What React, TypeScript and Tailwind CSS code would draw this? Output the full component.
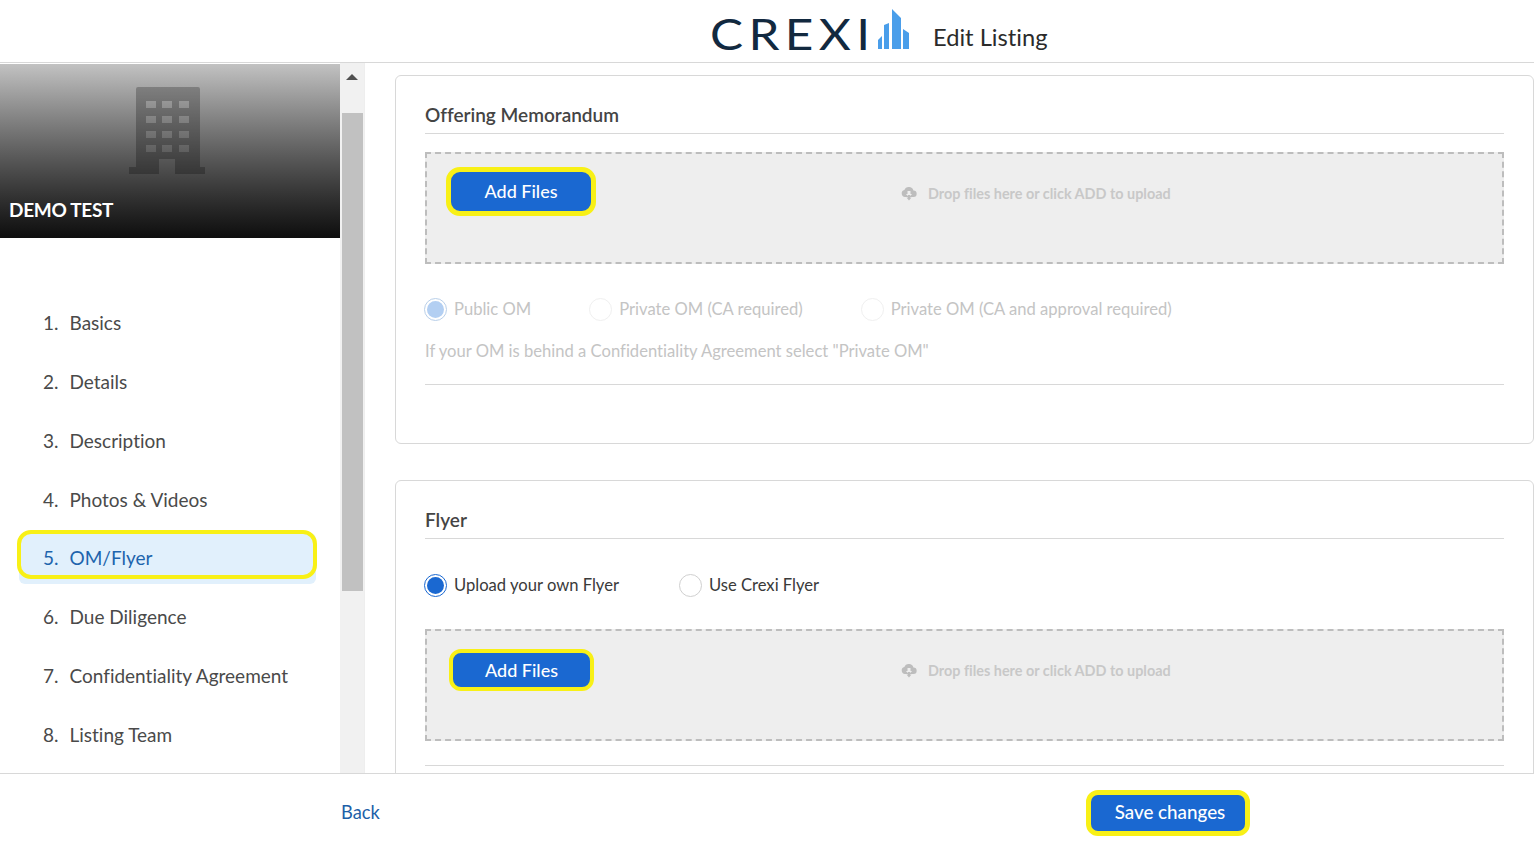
const navItems = [
  "Basics",
  "Details",
  "Description",
  "Photos & Videos",
  "OM/Flyer",
  "Due Diligence",
  "Confidentiality Agreement",
  "Listing Team",
];

const Radio = ({ checked = false, faded = false, label }: { checked?: boolean; faded?: boolean; label: string }) => (
  <div className="flex items-start gap-[7px]">
    <span
      className={`flex h-[23px] w-[23px] items-center justify-center rounded-full border bg-white ${
        checked ? (faded ? "border-[#b9cfe9]" : "border-[#1a68d1]") : faded ? "border-[#f0f0f0]" : "border-[#d0d0d0]"
      }`}
    >
      {checked && <span className={`h-[17px] w-[17px] rounded-full ${faded ? "bg-[#b3cff2]" : "bg-[#1a68d1]"}`} />}
    </span>
    <span className={`text-[16.6px] leading-[23px] ${faded ? "text-[#c4c4c4]" : "text-[#3a3a3a]"}`}>{label}</span>
  </div>
);

const CloudIcon = () => (
  <svg width="16" height="15" viewBox="0 0 16 15">
    <path
      fill="#bdbdbd"
      d="M4 11a3.5 3.5 0 0 1-.6-6.9A4.6 4.6 0 0 1 8 1a4.5 4.5 0 0 1 4.4 3.6A3.2 3.2 0 0 1 12.5 11z"
    />
    <path fill="#eeeeee" d="M6.5 5h3v3h1.6L8 11 4.9 8h1.6z" />
    <path fill="#bdbdbd" d="M7 9h2v2.5h1.5L8 14.5l-2.5-3H7z" />
  </svg>
);

const DropZone = ({ buttonClass }: { buttonClass: string }) => (
  <div className="relative flex h-[112px] items-start border-2 border-dashed border-[#bdbdbd] bg-[#eeeeee]">
    <button className={buttonClass}>Add Files</button>
    <div className="absolute left-[474px] top-[29px] flex items-center gap-[11px] text-[14.4px] font-bold text-[#c8c8c8]">
      <CloudIcon />
      <span>Drop files here or click ADD to upload</span>
    </div>
  </div>
);

const Building = () => (
  <svg width="76" height="87" viewBox="0 0 76 87" className="mt-[23px]">
    <path
      fillRule="evenodd"
      fill="#000"
      fillOpacity="0.24"
      d="M9 0h60a2 2 0 0 1 2 2v78h5v7H46V72H30v15H0v-7h7V2a2 2 0 0 1 2-2zM17 14v7h10v-7zM33 14v7h10v-7zM50 14v7h10v-7zM17 29v7h10v-7zM33 29v7h10v-7zM50 29v7h10v-7zM17 44v7h10v-7zM33 44v7h10v-7zM50 44v7h10v-7zM17 58v7h10v-7zM33 58v7h10v-7zM50 58v7h10v-7z"
    />
  </svg>
);

const LogoBars = () => (
  <svg width="32" height="41" viewBox="0 0 32 41" className="ml-[24px] mt-[9px]">
    <path fill="#4a9eea" d="M0 31l4-4v13H0zM6 16l5-2v26H6zM14 0l9 9v31h-9zM25 20l6 4v16h-6z" />
  </svg>
);

export default function App() {
  return (
    <div className="flex h-[849px] w-[1534px] flex-col overflow-hidden bg-white font-['Lato',sans-serif] [font-variant-ligatures:none]">
      <header className="flex h-[63px] shrink-0 items-start border-b border-[#d8d8d8] pl-[710px]">
        <span className="mt-[7px] origin-left scale-x-[1.15] text-[43px] font-normal leading-[54px] tracking-[4.7px] text-[#12293f]">
          CREXI
        </span>
        <LogoBars />
        <span className="ml-[23px] mt-[22px] text-[23.7px] leading-[30px] text-[#2b2b2b]">Edit Listing</span>
      </header>

      <div className="flex min-h-0 flex-1">
        <aside className="w-[340px] shrink-0 pt-[1px]">
          <div className="flex h-[174px] flex-col bg-gradient-to-b from-[#c2c2c2] to-[#0e0e0e]">
            <div className="flex justify-start pl-[129px]">
              <Building />
            </div>
            <div className="ml-[9px] mt-[24px] text-[19px] font-bold leading-[24px] tracking-[-0.3px] text-white">
              DEMO TEST
            </div>
          </div>
          <nav className="mt-[60px] pl-[19px] pr-[24px]">
            {navItems.map((item, i) => {
              const active = item === "OM/Flyer";
              return (
                <div
                  key={item}
                  className={`relative mb-[7.8px] flex h-[51px] items-center rounded-[6px] pl-[24px] text-[19px] ${
                    active ? "bg-[#e1f0fc] text-[#1d64ad]" : "text-[#4a4a4a]"
                  }`}
                >
                  <span className="w-[26.5px]">{i + 1}.</span>
                  <span>{item}</span>
                  {active && (
                    <span className="absolute -left-[2px] -right-[1px] -top-[3px] h-[49px] rounded-[14px] border-[4px] border-[#f8f016]" />
                  )}
                </div>
              );
            })}
          </nav>
        </aside>

        <div className="w-[25px] shrink-0 border-r border-[#eeeeee] bg-[#f1f1f1] pl-[2px]">
          <div className="flex h-[50px] justify-center pr-[3px] pt-[11px]">
            <svg width="12" height="6" viewBox="0 0 12 6">
              <path d="M6 0l6 6H0z" fill="#505050" />
            </svg>
          </div>
          <div className="h-[478px] w-[21px] bg-[#c1c1c1]" />
        </div>

        <main className="min-w-0 flex-1 overflow-hidden pl-[30px] pt-[12px]">
          <section className="h-[369px] rounded-[6px] border border-[#d8d8d8] px-[29px]">
            <h2 className="mt-[26px] text-[19px] font-semibold leading-[26px] text-[#444444]">Offering Memorandum</h2>
            <div className="mt-[5px] border-b border-[#d8d8d8]" />
            <div className="mt-[18px]">
              <DropZone buttonClass="ml-[19px] mt-[13px] h-[49px] w-[150px] rounded-[14px] border-[5px] border-[#f8f016] bg-[#1a68d1] text-[18px] font-medium text-white" />
            </div>
            <div className="-ml-[1px] mt-[34px] flex h-[23px]">
              <Radio checked faded label="Public OM" />
              <div className="ml-[58px]">
                <Radio faded label="Private OM (CA required)" />
              </div>
              <div className="ml-[58px]">
                <Radio faded label="Private OM (CA and approval required)" />
              </div>
            </div>
            <p className="mt-[18px] text-[16.6px] leading-[24px] text-[#c4c4c4]">
              If your OM is behind a Confidentiality Agreement select "Private OM"
            </p>
            <div className="mt-[21px] border-b border-[#d8d8d8]" />
          </section>

          <section className="mt-[36px] h-[400px] rounded-t-[6px] border border-[#d8d8d8] px-[29px]">
            <h2 className="mt-[26px] text-[19px] font-semibold leading-[26px] text-[#444444]">Flyer</h2>
            <div className="mt-[5px] border-b border-[#d8d8d8]" />
            <div className="-ml-[1px] mt-[35px] flex h-[23px]">
              <Radio checked label="Upload your own Flyer" />
              <div className="ml-[60px]">
                <Radio label="Use Crexi Flyer" />
              </div>
            </div>
            <div className="mt-[32px]">
              <DropZone buttonClass="ml-[22px] mt-[18px] h-[42px] w-[145px] rounded-[12px] border-[4px] border-[#f8f016] bg-[#1a68d1] text-[18px] font-medium text-white" />
            </div>
            <div className="mt-[24px] border-b border-[#d8d8d8]" />
          </section>
        </main>
      </div>

      <footer className="flex h-[76px] shrink-0 items-center border-t border-[#d8d8d8] bg-white pl-[341px] pt-[2px]">
        <a className="w-[745px] text-[18.3px] text-[#1d5fa8]">Back</a>
        <button className="h-[46px] w-[164px] rounded-[12px] border-[5px] border-[#f8f016] bg-[#1a68d1] pl-[4px] text-[18.8px] font-medium text-white">
          Save changes
        </button>
      </footer>
    </div>
  );
}
